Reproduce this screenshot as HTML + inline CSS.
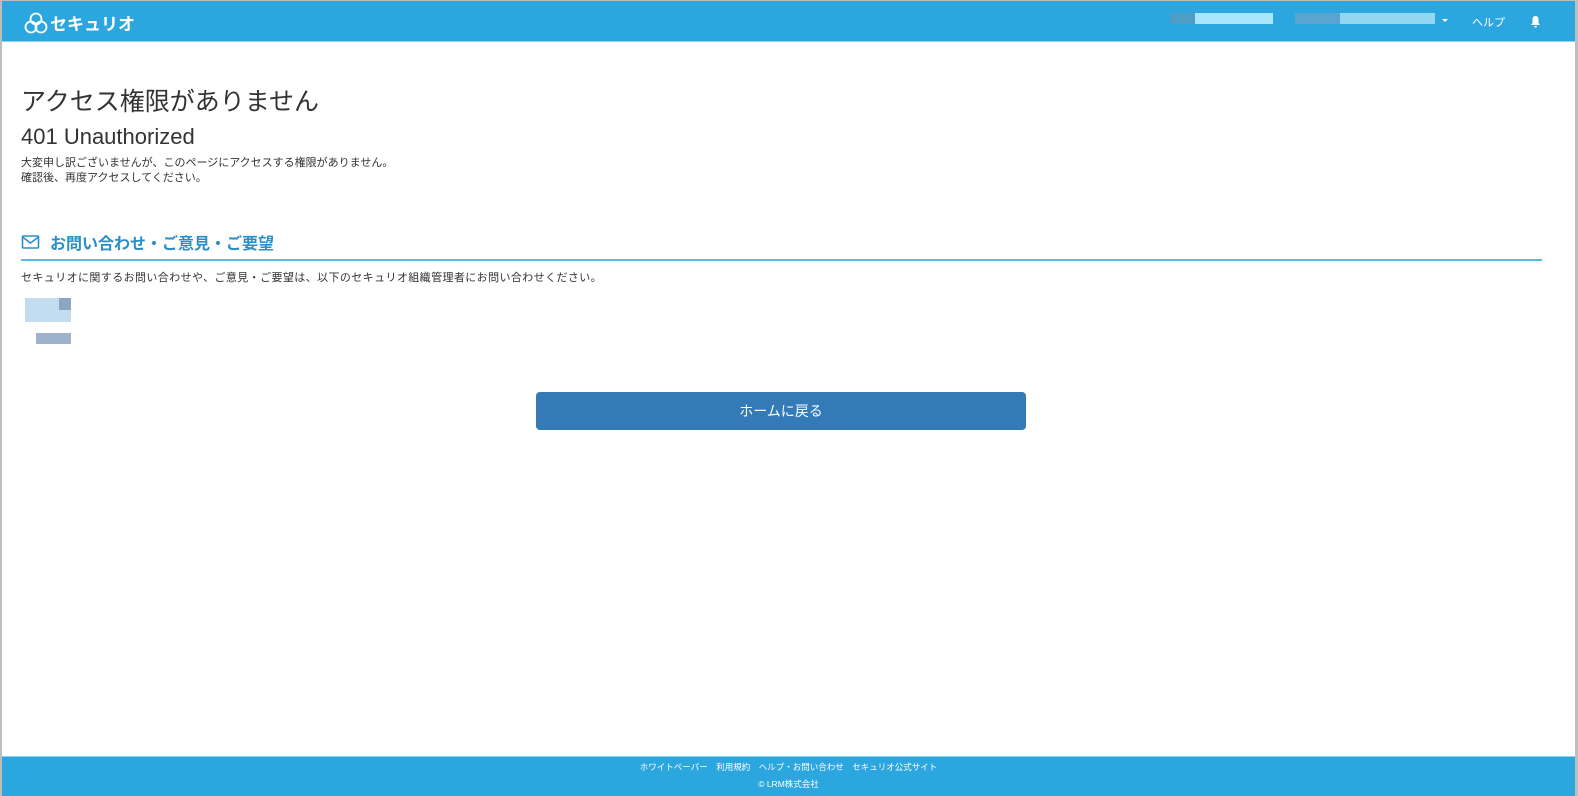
<!DOCTYPE html>
<html><head><meta charset="utf-8"><style>
*{margin:0;padding:0;box-sizing:border-box}
body{width:1578px;height:795px;background:#bdbdbd;font-family:"Liberation Sans","Noto Sans CJK JP",sans-serif;position:relative;overflow:hidden}
#page{position:absolute;left:2px;top:1px;width:1573px;height:794px;background:#fff}
.hdr{position:absolute;left:0;top:0;width:100%;height:41px;background:#2ca6df;border-bottom:1px solid #8fd0ee}
.logo{position:absolute;left:22px;top:9px;color:#fff;font-weight:bold;font-size:17px;display:flex;align-items:center;gap:2px}
.px{position:absolute;height:11px}
.ftr{position:absolute;left:0;top:755px;width:100%;height:40px;background:#2ca6df;border-top:1px solid #8fd0ee;color:#fff;font-size:8.5px;text-align:center}
h1{position:absolute;left:19px;top:81px;font-size:25px;font-weight:normal;color:#333}
h2{position:absolute;left:19px;top:123px;font-size:22px;font-weight:normal;color:#333}
.t{position:absolute;left:19px;font-size:11px;color:#333;line-height:15px}
.sec{position:absolute;left:19px;top:229px;width:1521px;height:31px;border-bottom:2px solid #5bb9e3;color:#2b8fc7;font-weight:bold;font-size:16px;display:flex;align-items:center;gap:10px;padding-bottom:6px}
.btn{position:absolute;left:534px;top:391px;width:490px;height:38px;background:#337ab7;border-radius:4px;color:#fff;font-size:14px;text-align:center;line-height:38px}
</style></head><body><div id="page">
<div class="hdr">
<div class="logo"><svg width="24" height="22" viewBox="0 0 24 22" fill="none" stroke="#fff" stroke-width="1.8"><circle cx="12" cy="7" r="5.5"/><circle cx="7" cy="15" r="5.5"/><circle cx="17" cy="15" r="5.5"/></svg>セキュリオ</div>
<div class="px" style="left:1168px;top:12px;width:25px;background:#4f9cc5"></div>
<div class="px" style="left:1193px;top:12px;width:78px;background:#a8e6fb"></div>
<div class="px" style="left:1293px;top:12px;width:45px;background:#5aa4cf"></div>
<div class="px" style="left:1338px;top:12px;width:95px;background:#92d6f2"></div>
<div style="position:absolute;left:1440px;top:18px;border:3px solid transparent;border-top:3px solid #fff"></div>
<div style="position:absolute;left:1470px;top:13px;color:#fff;font-size:11px">ヘルプ</div>
<svg style="position:absolute;left:1528px;top:14px" width="11" height="13" viewBox="0 0 11 13"><path d="M5.5 1C3 1 2.5 3 2.5 5v3L1 10h9L8.5 8V5C8.5 3 8 1 5.5 1zM4 11h3a1.5 1.5 0 0 1-3 0z" fill="#fff"/></svg>
</div>
<h1>アクセス権限がありません</h1>
<h2>401 Unauthorized</h2>
<div class="t" style="top:155px">大変申し訳ございませんが、このページにアクセスする権限がありません。<br>確認後、再度アクセスしてください。</div>
<div class="sec"><svg width="19" height="14" viewBox="0 0 18 14" fill="none" stroke="#2b8fc7" stroke-width="1.6"><rect x="1" y="1" width="16" height="12" rx="1"/><path d="M1 2l8 6 8-6"/></svg>お問い合わせ・ご意見・ご要望</div>
<div class="t" style="top:270px;letter-spacing:0.4px">セキュリオに関するお問い合わせや、ご意見・ご要望は、以下のセキュリオ組織管理者にお問い合わせください。</div>
<div style="position:absolute;left:23px;top:297px;width:46px;height:24px;background:#c4dcef"></div>
<div style="position:absolute;left:57px;top:297px;width:12px;height:12px;background:#8aa6c2"></div>
<div style="position:absolute;left:34px;top:332px;width:35px;height:11px;background:#9db3cc"></div>
<div class="btn">ホームに戻る</div>
<div class="ftr"><div style="margin-top:4px;word-spacing:14px">ホワイトペーパー　利用規約　ヘルプ・お問い合わせ　セキュリオ公式サイト</div><div style="margin-top:5px">© LRM株式会社</div></div>
</div></body></html>
